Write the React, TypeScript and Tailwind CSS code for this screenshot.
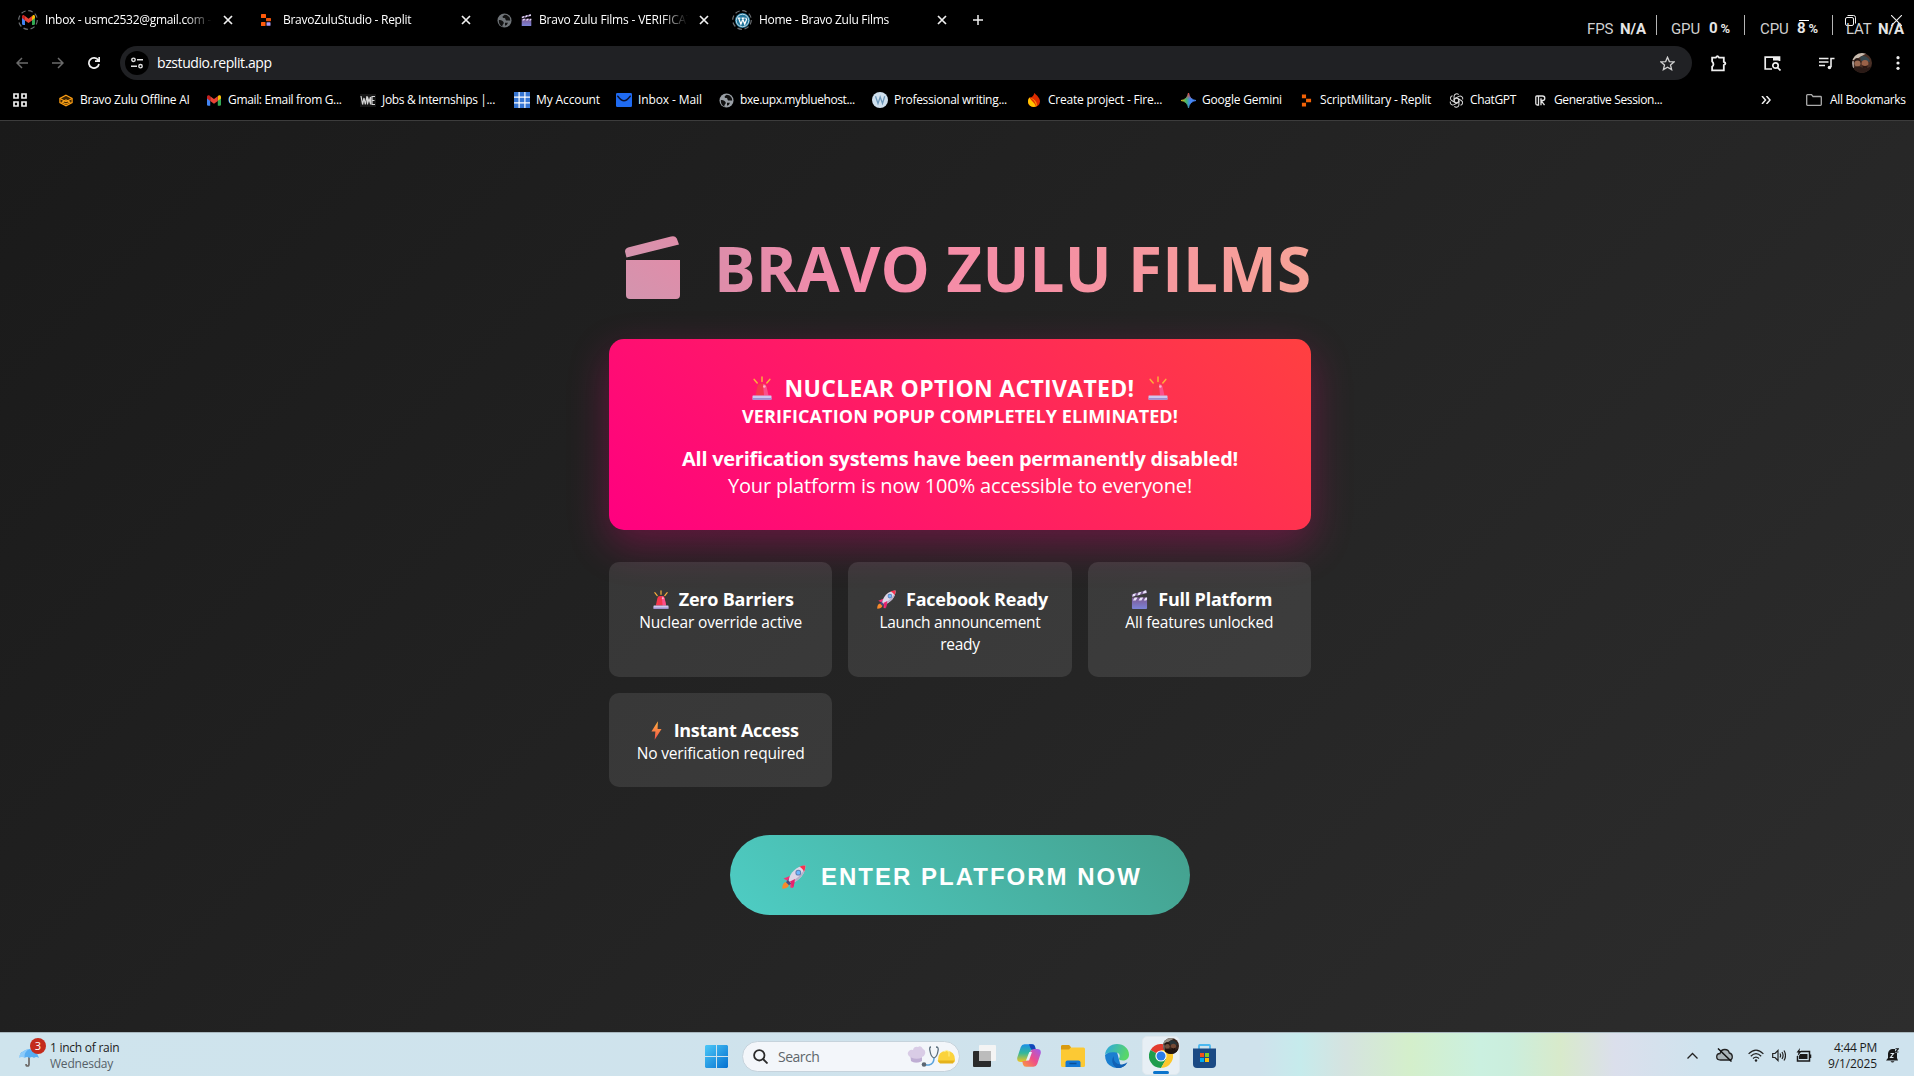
import type { ReactNode } from "react";

type P = { className?: string };

/* ---------- brand and favicon drawings ---------- */

function GmailMark({ className }: P) {
  return (
    <svg viewBox="0 0 24 18" className={className}>
      <path d="M0 3v13a2 2 0 0 0 2 2h3.5V8L0 3z" fill="#4285f4" />
      <path d="M24 3v13a2 2 0 0 1-2 2h-3.5V8L24 3z" fill="#34a853" />
      <path d="M18.500 2v7.500L24 5.500V2.600C24 .3 21.400-.8 19.700.6z" fill="#fbbc04" />
      <path d="M5.500 9.800V1.500L12 6.500l6.500-5v8.300L12 14.700z" fill="#ea4335" />
      <path d="M0 2.600v2.900l5.500 4.300V1.500L4.300.6C2.600-.8 0 .3 0 2.600z" fill="#c5221f" />
    </svg>
  );
}

function Ring({ children }: { children: ReactNode }) {
  return (
    <span className="relative flex size-5 items-center justify-center">
      <svg viewBox="0 0 20 20" className="absolute inset-0 size-5">
        <circle cx="10" cy="10" r="9.300" fill="none" stroke="#6a6d70" strokeWidth="1.200" strokeDasharray="4.600 2.700" />
      </svg>
      {children}
    </span>
  );
}

function ReplitTabMark() {
  return (
    <svg viewBox="0 0 12 12" className="size-3">
      <rect x="1" y="0" width="5" height="4" rx=".6" fill="#ff5a0a" />
      <rect x="6" y="4" width="5" height="3.200" rx=".6" fill="#e8520c" />
      <rect x="1" y="8" width="4.500" height="4" rx=".6" fill="#ff5a0a" />
      <rect x="6.500" y="8.200" width="4" height="3.600" rx=".6" fill="#a99bf5" />
    </svg>
  );
}

function ReplitMark() {
  return (
    <svg viewBox="0 0 12 14" className="h-[13px] w-[11px]">
      <path d="M1 .5h4.500v4H1zM5.500 5H11v4H5.500zM1 9.500h4.500v4H1z" fill="#f26207" />
    </svg>
  );
}

function Globe({ tone = "#9aa0a6" }: { tone?: string }) {
  return (
    <svg viewBox="0 0 16 16" className="size-[15px]">
      <circle cx="8" cy="8" r="7.500" fill={tone} />
      <path d="M2 7.500c1.200 0 3.500.3 4.500 1.600s1 2.200-.2 3.200c-.7.600-.6 1.500-.3 2.300C3.300 13.600 1.500 11 2 7.500z" fill="#111" />
      <path d="M8.200 1.800c-.8.800-2.600 1.400-2.200 2.600.3 1 1.900.4 2.600 1.200.8 1 .2 2 1.200 2.300 1.300.4 2.700-.4 4.200.3.400-3.300-2.300-6.300-5.800-6.400z" fill="#111" />
      <path d="M8.500 10.500h3.200l-1.300 2.300-1.900.8z" fill="#111" />
    </svg>
  );
}

function WordPressMark() {
  return (
    <svg viewBox="0 0 16 16" className="size-[15px]">
      <circle cx="8" cy="8" r="8" fill="#21759b" />
      <circle cx="8" cy="8" r="6.700" fill="none" stroke="#dceef6" strokeWidth=".9" />
      <path d="M2.800 5.500h3M7 5.500h3.200M3.900 5.600 6.300 12l1.700-4.500M8 5.600 10.400 12l1.900-5-.9-2" fill="none" stroke="#fff" strokeWidth="1.300" />
    </svg>
  );
}

function LayersMark() {
  return (
    <svg viewBox="0 0 16 14" className="h-[13px] w-[14px]">
      <path d="M8 .9 15 4.600v4.800L8 13.100 1 9.400V4.600z" fill="#3a2200" stroke="#ff9f12" strokeWidth="1.300" />
      <path d="M1 4.600 8 8.300l7-3.700" fill="none" stroke="#ff9f12" strokeWidth="1.300" />
      <path d="M3.500 9 8 6.200 12.500 9 8 11z" fill="none" stroke="#ffa81a" strokeWidth="1.200" />
    </svg>
  );
}

function JobsMark() {
  return (
    <svg viewBox="0 0 16 13" className="h-[13px] w-4">
      <rect width="16" height="13" fill="#151515" />
      <path d="M1 2l1.600 8.500L4 4l1.300 6.500L7 2M7.500 10.500V3L9 8l1.500-5v7.500M15 2.500h-3v8h3M12 6.500h2.500" fill="none" stroke="#d4d4d4" strokeWidth="1.200" />
    </svg>
  );
}

function BluehostMark() {
  return (
    <svg viewBox="0 0 16 16" className="size-4">
      <rect width="16" height="16" fill="#fff" />
      <g fill="#3575d3">
        <path d="M0 0h4.500v4.500H0zM5.700 0h4.600v4.500H5.700zM11.500 0H16v4.500h-4.500zM0 5.700h4.500v4.600H0zM5.700 5.700h4.600v4.600H5.700zM11.500 5.700H16v4.600h-4.500zM0 11.500h4.500V16H0zM5.700 11.500h4.600V16H5.700zM11.500 11.500H16V16h-4.500z" />
      </g>
    </svg>
  );
}

function MailMark() {
  return (
    <svg viewBox="0 0 16 14" className="h-[14px] w-4">
      <rect width="16" height="14" rx="1.200" fill="#1f6bf2" />
      <path d="M1.800 3.200C4 6 6 7.800 8 7.800S12 6 14.200 3.200" fill="none" stroke="#0a1230" strokeWidth="1.500" strokeLinecap="round" />
    </svg>
  );
}

function WritingMark() {
  return (
    <svg viewBox="0 0 16 16" className="size-4">
      <circle cx="8" cy="8" r="8" fill="#cfe0ee" />
      <path d="M3.500 4.200 6 11.500 8.200 5l2.300 6.500 2.200-7.300" fill="none" stroke="#6d97b8" strokeWidth="1.300" />
    </svg>
  );
}

function FirebaseMark() {
  return (
    <svg viewBox="0 0 12 14" className="h-[14px] w-3">
      <path d="M6.300 0C9 2.500 12 5 12 8.500A5.700 5.700 0 0 1 6 14C2.500 14 0 11.700 0 8.500c0-1.700.6-3 1.600-4C4 4.500 6 2.500 6.300 0z" fill="#dd2c00" />
      <path d="M1.600 4.500C2.500 7.500 6.500 9 8 13.500 4 15 0 12.500 0 8.600c0-1.700.6-3.100 1.600-4.100z" fill="#ffc400" />
      <path d="M1.600 4.500C4 5.500 8 8.500 8 13.500c2.200-1 .5-7.500-6.400-9z" fill="#ff9100" />
    </svg>
  );
}

function GeminiMark() {
  return (
    <svg viewBox="0 0 16 16" className="size-[15px]">
      <defs>
        <linearGradient id="gem" x1="0" y1="0" x2="1" y2="0">
          <stop offset="0" stopColor="#f6c21a" />
          <stop offset=".35" stopColor="#3fb56b" />
          <stop offset=".6" stopColor="#4285f4" />
          <stop offset="1" stopColor="#4f8cff" />
        </linearGradient>
        <linearGradient id="gemTop" x1="0" y1="0" x2="0" y2="1">
          <stop offset="0" stopColor="#f0443a" />
          <stop offset=".42" stopColor="#f0443a" stopOpacity="0" />
        </linearGradient>
      </defs>
      <path d="M8 0c.7 4.500 3.500 7.300 8 8-4.500.7-7.300 3.500-8 8-.7-4.500-3.500-7.300-8-8 4.500-.7 7.300-3.500 8-8z" fill="url(#gem)" stroke="url(#gem)" strokeWidth=".8" />
      <path d="M8 0c.7 4.500 3.500 7.300 8 8-4.500.7-7.300 3.500-8 8-.7-4.500-3.500-7.300-8-8 4.500-.7 7.300-3.500 8-8z" fill="url(#gemTop)" stroke="url(#gemTop)" strokeWidth=".8" />
    </svg>
  );
}

function ChatGptMark() {
  return (
    <svg viewBox="0 0 16 16" className="size-[15px]">
      <g fill="none" stroke="#d6d6d6" strokeWidth="1.100">
        {[0, 60, 120, 180, 240, 300].map((a) => (
          <path key={a} transform={`rotate(${a} 8 8)`} d="M8 5.200 5.400 6.700V3.600a2.800 2.800 0 0 1 4.900-1.800M8 5.200l2.500 1.400" />
        ))}
      </g>
    </svg>
  );
}

function SessionMark() {
  return (
    <svg viewBox="0 0 11 11" className="size-[11px]">
      <path d="M3.500 1H1.800Q.8 1 .8 2v6.500q0 1.500 1.500 1.500h1.200V1h4q2.300 0 2.300 2.200T7.500 5.500H6l3.500 4.700M6 3.200v7" fill="none" stroke="#e4e4e4" strokeWidth="1.300" />
    </svg>
  );
}

/* ---------- emoji-style drawings ---------- */

function Siren({ className }: P) {
  return (
    <svg viewBox="0 0 20 24" className={className}>
      <path d="M10 1v4.500M2.200 3.400l3 3.600M17.800 3.400l-3 3.600" stroke="#fbb03b" strokeWidth="1.500" strokeLinecap="round" />
      <path d="M3.500 19.500 5.400 10.500Q6 7.600 8.600 7.600h2.800q2.600 0 3.200 2.900l1.900 9z" fill="#f5364c" />
      <path d="M11 8h.8q2.200.2 2.800 2.700l1.900 8.800H12z" fill="#fb4f8c" />
      <circle cx="12.300" cy="10.500" r="1.300" fill="#ffb5c8" />
      <rect x=".5" y="19.500" width="19" height="4.200" rx=".6" fill="#cfc6ee" />
      <rect x=".5" y="22" width="19" height="1.700" rx=".6" fill="#9d8fd0" />
    </svg>
  );
}

function Rocket({ className }: P) {
  return (
    <svg viewBox="0 0 24 24" className={className}>
      <path d="M.3 23.700C.2 20 1.200 17.500 4 17l3 3c-.8 2.700-3 3.700-6.700 3.700z" fill="#f98a2b" />
      <path d="M1.600 13.500 8 11l5 5-2.200 7-2.500-.4.200-3.300-4-4z" fill="#f52f76" />
      <path d="M4 17.200 7.800 12.500l4 3.800L7 20.200z" fill="#4b4a80" />
      <path d="M6.500 15.500C8 8 14 1 23.400.5 23.500 9.500 17 15.500 9.500 18.500z" fill="#ded6e8" />
      <path d="M9.500 18.500C17 15.500 23.500 9.500 23.400.5 22 8 15 14 8 17z" fill="#b9afc9" />
      <path d="M17.300 1.800C19.200 1 21 .5 23.400.5c0 2.300-.5 4.300-1.300 6.200-1.200-2.500-2.600-3.900-4.800-4.900z" fill="#f8324f" />
      <circle cx="16.300" cy="7.700" r="2.900" fill="#5e7fb5" />
      <circle cx="16.300" cy="7.700" r="1.900" fill="#6fb8ff" />
      <path d="M8 16.500l5-2.500-1.500 8.500-2.200-3.200z" fill="#e7226d" />
    </svg>
  );
}

function Clapper({ className }: P) {
  return (
    <svg viewBox="0 0 18 20" className={className}>
      <defs>
        <linearGradient id="clap" x1="0" y1="0" x2="0" y2="1">
          <stop offset="0" stopColor="#7d5a92" />
          <stop offset="1" stopColor="#7c83d8" />
        </linearGradient>
      </defs>
      <path d="M.6 4.600 16 .3l.7 3L1.200 7.200z" fill="#7d6496" />
      <path d="M2.300 4.200l3-.9-1.200 3.100-2.800.7zM8 2.600l3-.9-1.500 3.300-2.800.7zM13.500 1.100 16 .3l.6 2.500-4.300 1.100z" fill="#e9e3fa" />
      <path d="M1 8h16v11a1 1 0 0 1-1 1H2a1 1 0 0 1-1-1z" fill="url(#clap)" />
      <path d="M4 8h3l-2 3H2zM10 8h3l-2 3H8zM15.500 8H17v2l-1 1h-2.500z" fill="#e9e3fa" />
    </svg>
  );
}

function Bolt({ className }: P) {
  return (
    <svg viewBox="0 0 12 20" className={className}>
      <defs>
        <linearGradient id="bolt" x1="0" y1="0" x2="0" y2="1">
          <stop offset="0" stopColor="#ffb23e" />
          <stop offset="1" stopColor="#f4504a" />
        </linearGradient>
      </defs>
      <path d="M7.500 0 .5 11.200h4.300L4 20l7.500-11.700H7.200z" fill="url(#bolt)" />
    </svg>
  );
}

/* ---------- browser chrome ---------- */

function CloseX() {
  return (
    <svg viewBox="0 0 10 10" className="size-[10px]">
      <path d="M1 1l8 8M9 1 1 9" stroke="#f0f0f0" strokeWidth="1.700" />
    </svg>
  );
}

function Tab({ icon, children }: { icon: ReactNode; children: ReactNode }) {
  return (
    <div className="flex w-[238px] shrink-0 items-center">
      <span className="flex w-5 shrink-0 justify-center">{icon}</span>
      <span className="ml-[7px] flex w-[167px] items-center overflow-hidden whitespace-nowrap [mask-image:linear-gradient(90deg,#000_84%,transparent)]">
        {children}
      </span>
      <span className="ml-[11px]">
        <CloseX />
      </span>
    </div>
  );
}

function Bookmark({ width, icon, label, track }: { width: string; icon: ReactNode; label: string; track: string }) {
  return (
    <div className={`flex shrink-0 items-center gap-1.5 ${width}`}>
      <span className="flex w-4 shrink-0 justify-center">{icon}</span>
      <span className={`whitespace-nowrap ${track}`}>{label}</span>
    </div>
  );
}

function Portrait({ className }: P) {
  return (
    <svg viewBox="0 0 20 20" className={className}>
      <defs>
        <clipPath id="face">
          <circle cx="10" cy="10" r="10" />
        </clipPath>
      </defs>
      <g clipPath="url(#face)">
        <rect width="20" height="20" fill="#4a3026" />
        <path d="M0 0h15L8 4 3 7H0z" fill="#c9bdb0" />
        <path d="M8 4q5-3 9 2l1 3-9-1z" fill="#35454c" />
        <path d="M2 7q3-4 6 0l1 3-7-1z" fill="#2a1c18" />
        <circle cx="5.500" cy="10.500" r="3" fill="#9a6a52" />
        <circle cx="13" cy="10.500" r="3.400" fill="#9a6248" />
        <path d="M10 12q3 2 6 0l-1 3h-4z" fill="#2b1712" />
        <path d="M2 14.500q4-2 8 0t9-1v7H2z" fill="#2a1a16" />
        <path d="M0 8q2-1 2 2v5H0z" fill="#a39a96" />
      </g>
    </svg>
  );
}

function Stats() {
  return (
    <div className="absolute top-[15px] left-[1587px] flex h-5 w-[320px] items-center font-['Roboto'] text-[15px] tracking-[-0.1px] text-[#d0d0d0]">
      <span className="w-[33px] pt-[7px]">FPS</span>
      <b className="w-[36px] pt-[7px] text-[#e6e6e6]">N/A</b>
      <span className="h-5 w-px bg-[#b5b5b5]" />
      <span className="ml-[14px] w-[38px] pt-[7px]">GPU</span>
      <b className="flex w-[35px] items-baseline gap-[3px] pt-[7px] text-[#e6e6e6]">
        0<span className="text-[13px]">%</span>
      </b>
      <span className="h-5 w-px bg-[#b5b5b5]" />
      <span className="ml-[15px] w-[37px] pt-[7px]">CPU</span>
      <b className="flex w-[35px] items-baseline gap-[3px] pt-[7px] text-[#e6e6e6]">
        8<span className="text-[13px]">%</span>
      </b>
      <span className="h-5 w-px bg-[#b5b5b5]" />
      <span className="ml-[13px] w-[32px] pt-[7px]">LAT</span>
      <b className="pt-[7px] text-[#e6e6e6]">N/A</b>
    </div>
  );
}

function BrowserChrome() {
  return (
    <header className="relative h-[121px] border-b border-[#3c3c3c] bg-black text-[12px] leading-4 text-white">
      <div className="flex h-10 items-center pl-[18px]">
        <Tab icon={<Ring><GmailMark className="h-[10px] w-[13px]" /></Ring>}>
          <span className="tracking-[-0.3px]">Inbox - usmc2532@gmail.com -</span>
        </Tab>
        <Tab icon={<ReplitTabMark />}>
          <span className="tracking-[-0.28px]">BravoZuluStudio - Replit</span>
        </Tab>
        <Tab icon={<Globe tone="#6f7478" />}>
          <Clapper className="mr-[7px] h-3 w-[11px] shrink-0" />
          <span className="tracking-[-0.18px]">Bravo Zulu Films - VERIFICATION</span>
        </Tab>
        <Tab icon={<Ring><WordPressMark /></Ring>}>
          <span className="tracking-[-0.28px]">Home - Bravo Zulu Films</span>
        </Tab>
        <svg viewBox="0 0 10 10" className="ml-[3px] size-[10px]">
          <path d="M5 0v10M0 5h10" stroke="#eee" strokeWidth="1.500" />
        </svg>
        <div className="ml-auto flex items-center pr-3">
          <span className="mr-[36px] h-px w-[10px] bg-white" />
          <svg viewBox="0 0 11 11" className="mr-[35px] size-[11px]" fill="none" stroke="#f2f2f2">
            <rect x=".5" y="2.500" width="8" height="8" rx="1.500" />
            <path d="M2.500.5h6q2 0 2 2v6" />
          </svg>
          <svg viewBox="0 0 10 10" className="size-[11px]">
            <path d="M0 0l10 10M10 0 0 10" stroke="#f2f2f2" />
          </svg>
        </div>
      </div>
      <Stats />

      <div className="flex h-[46px] items-center pl-4">
        <svg viewBox="0 0 12 12" className="size-3" fill="none" stroke="#6b6b6b" strokeWidth="1.500">
          <path d="M12 6H1M6 1 1 6l5 5" />
        </svg>
        <svg viewBox="0 0 12 12" className="ml-6 size-3" fill="none" stroke="#6b6b6b" strokeWidth="1.500">
          <path d="M0 6h11M6 1l5 5-5 5" />
        </svg>
        <svg viewBox="0 0 12 12" className="ml-6 size-3" fill="none" stroke="#f0f0f0" strokeWidth="1.700">
          <path d="M10.300 3.300A5.100 5.100 0 1 0 11 7M11.200 0v4.200H7" />
        </svg>
        <div className="ml-5 flex h-[34px] w-[1572px] items-center rounded-full bg-[#202124] pr-[17px] pl-[5px]">
          <span className="flex size-6 items-center justify-center rounded-full bg-black">
            <svg viewBox="0 0 12 12" className="size-3" fill="none" stroke="#e3e3e3" strokeWidth="1.400">
              <circle cx="2.500" cy="2.800" r="1.700" />
              <path d="M6 2.800h6M0 9.200h6" />
              <circle cx="9.500" cy="9.200" r="1.700" />
            </svg>
          </span>
          <span className="ml-2 text-[14px] tracking-[-0.41px]">bzstudio.replit.app</span>
          <svg viewBox="0 0 16 16" className="ml-auto size-[15px]" fill="none" stroke="#d0d0d0" strokeWidth="1.400">
            <path d="M8 1.300l2 4.600 5 .4-3.800 3.300L12.400 14.500 8 11.900l-4.400 2.600 1.200-4.900L1 6.300l5-.4z" />
          </svg>
        </div>
        <svg viewBox="0 0 16 16" className="ml-[18px] size-[17px]" fill="none" stroke="#eee" strokeWidth="1.700">
          <path d="M2 2.500h3.500q1.500-2.600 3 0H13V6.500q3 1.500 0 3V14.500H2V11q2.500-2.200 0-5z" />
        </svg>
        <svg viewBox="0 0 17 15" className="ml-[37px] h-[15px] w-[17px]" fill="none" stroke="#eee" strokeWidth="1.700">
          <path d="M8 13H1.200V1.200H15.500V5" />
          <path d="M9 3h6.500" strokeWidth="3" />
          <circle cx="11.500" cy="9.500" r="2.700" />
          <path d="M13.500 11.500l3 3" />
        </svg>
        <svg viewBox="0 0 16 13" className="ml-[38px] h-[13px] w-4" fill="none" stroke="#eee" strokeWidth="1.600">
          <path d="M0 1.500h9.500M0 5h9.500M0 8.500h6M12 10V1.500h3.500" />
          <circle cx="10.500" cy="10.500" r="1.800" fill="#eee" stroke="none" />
        </svg>
        <Portrait className="ml-[17px] size-5" />
        <svg viewBox="0 0 4 14" className="ml-6 h-[14px] w-1" fill="#eee">
          <circle cx="2" cy="1.700" r="1.600" />
          <circle cx="2" cy="7" r="1.600" />
          <circle cx="2" cy="12.300" r="1.600" />
        </svg>
      </div>

      <div className="flex h-7 items-center pl-[13px]">
        <svg viewBox="0 0 14 14" className="mr-[31px] size-[14px] shrink-0" fill="none" stroke="#eee" strokeWidth="1.700">
          <path d="M1 1h4v4H1zM9 1h4v4H9zM1 9h4v4H1zM9 9h4v4H9z" />
        </svg>
        <Bookmark width="w-[148px]" icon={<LayersMark />} label="Bravo Zulu Offline AI" track="tracking-[-0.26px]" />
        <Bookmark width="w-[154px]" icon={<GmailMark className="h-[11px] w-[14px]" />} label="Gmail: Email from G..." track="tracking-[-0.34px]" />
        <Bookmark width="w-[154px]" icon={<JobsMark />} label="Jobs & Internships |..." track="tracking-[-0.34px]" />
        <Bookmark width="w-[102px]" icon={<BluehostMark />} label="My Account" track="tracking-[-0.12px]" />
        <Bookmark width="w-[102px]" icon={<MailMark />} label="Inbox - Mail" track="tracking-[-0.1px]" />
        <Bookmark width="w-[154px]" icon={<Globe />} label="bxe.upx.mybluehost..." track="tracking-[-0.41px]" />
        <Bookmark width="w-[154px]" icon={<WritingMark />} label="Professional writing..." track="tracking-[-0.3px]" />
        <Bookmark width="w-[154px]" icon={<FirebaseMark />} label="Create project - Fire..." track="tracking-[-0.23px]" />
        <Bookmark width="w-[118px]" icon={<GeminiMark />} label="Google Gemini" track="tracking-[-0.2px]" />
        <Bookmark width="w-[150px]" icon={<ReplitMark />} label="ScriptMilitary - Replit" track="tracking-[-0.19px]" />
        <Bookmark width="w-[84px]" icon={<ChatGptMark />} label="ChatGPT" track="tracking-[-0.35px]" />
        <Bookmark width="w-[229px]" icon={<SessionMark />} label="Generative Session..." track="tracking-[-0.37px]" />
        <svg viewBox="0 0 10 8" className="h-2 w-[10px] shrink-0" fill="none" stroke="#eee" strokeWidth="1.500">
          <path d="M1 0l3.500 4L1 8M5.500 0 9 4 5.500 8" />
        </svg>
        <svg viewBox="0 0 16 12" className="ml-[35px] h-3 w-4 shrink-0" fill="none" stroke="#ababab" strokeWidth="1.300">
          <path d="M.7 1.500q0-.8.8-.8h4l1.500 1.800h7.500q.8 0 .8.800v7.200q0 .8-.8.800h-13q-.8 0-.8-.8z" />
        </svg>
        <span className="ml-2 tracking-[-0.33px] whitespace-nowrap">All Bookmarks</span>
      </div>
    </header>
  );
}

/* ---------- landing page ---------- */

function Feature({ icon, title, children }: { icon: ReactNode; title: ReactNode; children: ReactNode }) {
  return (
    <div className="rounded-[10px] bg-white/10 pt-[25px] pb-[22px] text-center text-white">
      <h3 className="flex h-[25px] items-center justify-center gap-[10px] pb-px pl-[5px] text-[18px] leading-6 font-bold">
        {icon}
        {title}
      </h3>
      <p className="px-6 text-[15.500px] leading-[21.500px]">{children}</p>
    </div>
  );
}

function Landing() {
  return (
    <main className="flex h-[911px] flex-col items-center bg-[linear-gradient(135deg,#1a1a1a_0%,#2d2d2d_100%)] pl-[6px]">
      <div className="mt-[103px] flex w-[702px] flex-col">
        <h1 className="flex h-[86px] items-center pt-px pl-4">
          <svg viewBox="0 0 55 63" className="h-[63px] w-[55px] shrink-0">
            <defs>
              <linearGradient id="titleIcon" x1="0" y1="1" x2="1" y2="0">
                <stop offset="0" stopColor="#d394ae" />
                <stop offset="1" stopColor="#e08da9" />
              </linearGradient>
            </defs>
            <g fill="url(#titleIcon)">
              <path d="M0 15.500q0-3 3-4L46 .5q4-1.200 5.800 2l2.200 6L1.500 21.500z" />
              <path d="M1 24h54v35q0 4-4 4H5q-4 0-4-4z" />
            </g>
          </svg>
          <span className="ml-[34px] bg-[linear-gradient(90deg,#dd8daa_0%,#f58aaa_24%,#f58fa4_55%,#f7a397_100%)] bg-clip-text text-[62px] leading-[86px] font-bold tracking-[0.2px] whitespace-nowrap text-transparent">
            BRAVO ZULU FILMS
          </span>
        </h1>

        <section className="mt-[29px] flex h-[191px] flex-col items-center rounded-[15px] bg-[linear-gradient(45deg,#ff0080,#ff4040)] text-white shadow-[0_15px_40px_rgba(255,0,128,0.3)]">
          <h2 className="mt-[35px] flex h-7 items-center text-[23px] leading-7 font-bold tracking-[0.3px] whitespace-nowrap">
            <Siren className="mr-[13px] h-6 w-5" />
            NUCLEAR OPTION ACTIVATED!
            <Siren className="ml-[14px] h-6 w-5" />
          </h2>
          <h3 className="text-[18px] leading-7 font-bold tracking-[0.1px] whitespace-nowrap">VERIFICATION POPUP COMPLETELY ELIMINATED!</h3>
          <p className="mt-[15px] text-[20px] leading-[27px] font-bold tracking-[-0.26px] whitespace-nowrap">
            All verification systems have been permanently disabled!
          </p>
          <p className="text-[20px] leading-[27px] tracking-[-0.14px] whitespace-nowrap">Your platform is now 100% accessible to everyone!</p>
        </section>

        <section className="mt-8 grid grid-cols-3 gap-4">
          <Feature icon={<Siren className="h-[19px] w-4" />} title={<span className="tracking-[-0.2px]">Zero Barriers</span>}>
            <span className="tracking-[-0.16px]">Nuclear override active</span>
          </Feature>
          <Feature icon={<Rocket className="size-[19px]" />} title={<span className="tracking-[-0.23px]">Facebook Ready</span>}>
            <span className="tracking-[-0.31px]">Launch announcement ready</span>
          </Feature>
          <Feature icon={<Clapper className="h-[19px] w-[17px]" />} title={<span className="tracking-[-0.22px]">Full Platform</span>}>
            <span className="tracking-[-0.17px]">All features unlocked</span>
          </Feature>
          <Feature icon={<Bolt className="ml-[3px] mr-[2px] h-[19px] w-[11px]" />} title={<span className="tracking-[-0.3px]">Instant Access</span>}>
            <span className="tracking-[-0.15px]">No verification required</span>
          </Feature>
        </section>

        <button className="mt-12 flex h-20 w-[460px] items-center self-center rounded-full bg-[linear-gradient(45deg,#4ecdc4,#44a08d)] pt-[4px] pl-[52px] font-['Liberation_Sans'] text-[24px] font-bold tracking-[2px] whitespace-nowrap text-white">
          <Rocket className="mr-[15px] size-6" />
          ENTER PLATFORM NOW
        </button>
      </div>
    </main>
  );
}

/* ---------- Windows taskbar ---------- */

function SearchArt() {
  return (
    <svg viewBox="0 0 48 22" className="h-[22px] w-12">
      <path d="M3 12Q-1 9 2 6q2-2 4-1 1-4 5-3 3-2 5 2 3 1 2 5-1 3-3 3v4q-6 3-11 0z" fill="#d9cce6" />
      <path d="M4 12.500q6 2.500 11 0v3.500q-6 3-11 0z" fill="#bfaed4" />
      <path d="M24 2q-2 0-1 4 1 6 4 7 3-1 4-7 1-4-2-4" fill="none" stroke="#5b6e7c" strokeWidth="1.300" />
      <path d="M27 13q0 6-5 7h-4" fill="none" stroke="#5aa3dc" strokeWidth="1.500" />
      <circle cx="17" cy="19.500" r="2.300" fill="#5b6672" />
      <path d="M31 15q0-9 8.500-9T48 15q0 2-1 2.500H32q-1-.5-1-2.500z" fill="#fbd33c" />
      <path d="M30.500 15.500H47.500L46 18.500H33z" fill="#e5b21c" />
      <path d="M37 6.500q3-2 5 0v5" fill="none" stroke="#fff08a" strokeWidth="1" />
    </svg>
  );
}

function Copilot() {
  return (
    <svg viewBox="0 0 24 23" className="h-[23px] w-6">
      <defs>
        <linearGradient id="cpA" x1="0" y1="0" x2="0" y2="1">
          <stop offset="0" stopColor="#1a8fe8" />
          <stop offset=".5" stopColor="#34b89a" />
          <stop offset="1" stopColor="#f5c51d" />
        </linearGradient>
        <linearGradient id="cpB" x1="1" y1="0" x2="0" y2="1">
          <stop offset="0" stopColor="#9a5cf0" />
          <stop offset=".5" stopColor="#ee4e8a" />
          <stop offset="1" stopColor="#fa9c3c" />
        </linearGradient>
      </defs>
      <path d="M7.500.3H15q2.300 0 3 2.300L18.800 6H14l-3.500 9.500Q9.700 18 7 18H4Q-.5 18 .3 13.500L3.800 3Q4.700.3 7.500.3z" fill="url(#cpA)" />
      <path d="M12 .3h3q2.300 0 3 2.300L18.800 6H16q-2 0-2.700-2.200z" fill="#1546b8" />
      <path d="M16.500 22.700H9q-2.300 0-3-2.300L5.200 17H10l3.500-9.500Q14.300 5 17 5h3q4.500 0 3.700 4.500L20.200 20q-.9 2.700-3.700 2.700z" fill="url(#cpB)" />
      <path d="M12.300 8h2.700l-3 8.500H9z" fill="#e6f0f5" />
    </svg>
  );
}

function Edge() {
  return (
    <svg viewBox="0 0 24 24" className="size-6">
      <defs>
        <linearGradient id="edA" x1="0" y1="0" x2="1" y2=".3">
          <stop offset="0" stopColor="#2ba5e6" />
          <stop offset="1" stopColor="#58d768" />
        </linearGradient>
        <linearGradient id="edB" x1="0" y1="0" x2="0" y2="1">
          <stop offset="0" stopColor="#1577c9" />
          <stop offset="1" stopColor="#0d55a8" />
        </linearGradient>
      </defs>
      <path d="M0 11Q0 20 8 23.300 12 24.700 16 23.300L12 8 4 8z" fill="#1b7fd0" />
      <path d="M0 11C.5 4.500 5.500 0 12 0c7 0 12 5 12 10.500 0 4-3 6-6 6-2.500 0-4.500-1-4-2 1.500-2 1-5.500-3-6C6 7.500 1 9 0 11z" fill="url(#edA)" />
      <path d="M8 13c0 5.500 5 9 10 8 2-.4 3.500-1.500 4.300-2.200C20 22.500 16.500 24 12.500 24 8 22 6 17 8 13z" fill="url(#edB)" />
      <path d="M9 12c-1 5 2 9 8 8.500 2.500-.3 4.500-1.500 5.500-2.500C20 23 15 24.500 12 24 7 21 6.500 15 9 12z" fill="#1262b5" />
    </svg>
  );
}

function ChromeMark() {
  return (
    <svg viewBox="0 0 24 24" className="size-6">
      <path d="M12 12 1.600 6A12 12 0 0 1 22.400 6z" fill="#e33b2e" />
      <path d="M1.600 6A12 12 0 0 0 12 24l5.200-9L12 12z" fill="#1f9d4d" />
      <path d="M22.400 6H12l5.200 9L12 24A12 12 0 0 0 22.400 6z" fill="#fcc72b" />
      <circle cx="12" cy="12" r="5.600" fill="#fff" />
      <circle cx="12" cy="12" r="4.500" fill="#2b7de9" />
    </svg>
  );
}

function Taskbar() {
  return (
    <footer className="flex h-11 items-center border-t border-[#a9b8bf] bg-[linear-gradient(90deg,#cfe4ed_0px,#cfe2ec_1260px,#c6ebec_1300px,#d5e3e0_1345px,#d4efcb_1410px,#cbf0e0_1480px,#cbeedd_1510px,#d8eacb_1560px,#dbdfec_1615px,#cfe3ee_1700px)] text-[12px] text-[#1c1c1c]">
      <div className="flex w-[705px] items-center pl-[19px]">
        <span className="relative">
          <svg viewBox="0 0 21 21" className="mt-[6px] size-[21px]">
            <path d="M10 8v9q0 2-1.500 2T7 17" fill="none" stroke="#6d6a68" strokeWidth="1.700" />
            <path d="M0 11Q2 3 10.500 2 18 3 20 11q-3-2-5 0-2-2-4.500 0Q8 9 5.500 11 3-1 0 11z" fill="#58aef2" />
            <path d="M0 11Q1 4 10 2 5 5 5.500 11 3 9 0 11z" fill="#8ccbfa" />
          </svg>
          <span className="absolute top-[-3px] left-[11px] flex size-4 items-center justify-center rounded-full bg-[#c42b1c] text-[11px] text-white">3</span>
        </span>
        <span className="ml-[10px] flex flex-col pt-[2px] leading-4">
          <span className="tracking-[-0.25px]">1 inch of rain</span>
          <span className="tracking-[-0.22px] text-[#566168]">Wednesday</span>
        </span>
      </div>

      <svg viewBox="0 0 23 23" className="mt-[3px] size-[23px]">
        <defs>
          <linearGradient id="win" x1="0" y1="0" x2="1" y2="1">
            <stop offset="0" stopColor="#4cc8f8" />
            <stop offset="1" stopColor="#0470d0" />
          </linearGradient>
        </defs>
        <path d="M1 0h10v11H0V1zM12 0h10l1 1v10H12zM0 12h11v11H1l-1-1zM12 12h11v10l-1 1H12z" fill="url(#win)" />
      </svg>
      <div className="mt-[3px] ml-[14px] flex h-[31px] w-[218px] items-center rounded-full border border-[#c6d3dc] bg-[#f3f6fa] pr-1 pl-[10px]">
        <svg viewBox="0 0 15 15" className="size-[15px]" fill="none" stroke="#2a2a2a" strokeWidth="1.800">
          <circle cx="6.300" cy="6.300" r="5.200" />
          <path d="M10 10l4.500 4.500" />
        </svg>
        <span className="ml-[10px] text-[14px] tracking-[-0.5px] text-[#60666b]">Search</span>
        <span className="ml-auto">
          <SearchArt />
        </span>
      </div>
      <svg viewBox="0 0 23 22" className="mt-[2px] ml-[13px] h-[22px] w-[23px]">
        <rect y="6" width="18" height="16" rx="1" fill="#2b2b2b" />
        <rect x="6" width="17" height="16" rx="1" fill="#f4f4f4" />
        <path d="M6 6h12v10H6z" fill="#bcbcbc" />
      </svg>
      <span className="mt-[2px] ml-[21px]">
        <Copilot />
      </span>
      <svg viewBox="0 0 24 22" className="mt-[2px] ml-5 h-[22px] w-6">
        <path d="M0 1.500Q0 0 1.500 0H8l2 2.500h12.500Q24 2.500 24 4v16.500q0 1.500-1.500 1.500h-21Q0 22 0 20.500z" fill="#fcc934" />
        <path d="M0 4V1.500Q0 0 1.500 0H8l2 2.200L8 4.500H0z" fill="#d99a10" />
        <path d="M4.500 22v-4.500q0-2 2-2h11q2 0 2 2V22z" fill="#1277d4" />
        <path d="M8.500 18.500h7" stroke="#0a4f96" strokeWidth="1.500" />
      </svg>
      <span className="mt-[2px] ml-5">
        <Edge />
      </span>
      <div className="relative mt-[2px] ml-[13px] flex h-[39px] w-[38px] items-center rounded-[5px] border border-[#dfe8ee] bg-[#e7eff5] pl-[6px]">
        <ChromeMark />
        <Portrait className="absolute top-[1px] left-[20px] size-4 brightness-75" />
        <span className="absolute bottom-0 left-[10px] h-[3px] w-4 rounded-full bg-[#0a74cc]" />
      </div>
      <svg viewBox="0 0 23 24" className="mt-[2px] ml-[13px] h-6 w-[23px]">
        <path d="M6 6V1.700q0-.7.700-.7h9.600q.7 0 .7.700V6" fill="none" stroke="#4cb8ef" strokeWidth="1.800" />
        <path d="M0 4.500h23V20q0 4-4 4H4q-4 0-4-4z" fill="#1b4a84" />
        <path d="M7 9h4v4H7z" fill="#f1511b" />
        <path d="M12 9h4v4h-4z" fill="#80cc28" />
        <path d="M7 14h4v4H7z" fill="#00adef" />
        <path d="M12 14h4v4h-4z" fill="#fbbc09" />
      </svg>

      <div className="ml-auto flex items-center pt-px pr-[15px]">
        <svg viewBox="0 0 11 7" className="mr-[18px] h-[7px] w-[11px]" fill="none" stroke="#222" strokeWidth="1.300">
          <path d="M.5 6.500l5-5 5 5" />
        </svg>
        <svg viewBox="0 0 17 14" className="mr-[15px] h-[14px] w-[17px]">
          <path d="M4.500 12Q.7 12 .7 8.800T4 5.500Q5 1.500 8.800 1.500T13.300 5Q16.300 5.500 16.300 8.700T13 12z" fill="#aab4b8" stroke="#222" strokeWidth="1.300" />
          <path d="M2 .5 15.500 13.500" stroke="#111" strokeWidth="1.500" />
        </svg>
        <svg viewBox="0 0 16 13" className="mr-[8px] h-[13px] w-4" fill="none" stroke="#222" strokeWidth="1.200">
          <path d="M.6 4.800q7.400-7.500 14.800 0M2.800 7.200q5.200-5 10.400 0M5 9.500q3-2.700 6 0" />
          <circle cx="8" cy="11.500" r="1.200" fill="#222" stroke="none" />
        </svg>
        <svg viewBox="0 0 14 13" className="mr-[10px] h-[13px] w-[14px]" fill="none" stroke="#222" strokeWidth="1.200">
          <path d="M.7 4.500H3l3-3v10l-3-3H.7zM8 4.500q1.200 2 0 4M10 3q2.200 3.500 0 7M12 1.500q3 5 0 10" />
        </svg>
        <svg viewBox="0 0 16 15" className="mr-[15px] h-[15px] w-4">
          <path d="M5 3.500h8.500V13h-12V8M14.500 6.500v3.500" fill="none" stroke="#1a1a1a" strokeWidth="1.500" />
          <path d="M4 6h7.500v5H3V8z" fill="#1a1a1a" />
          <path d="M4 0 .5 4.500h2L1.500 8 6 3H3.500z" fill="#1a1a1a" />
        </svg>
        <span className="mr-[9px] flex w-[50px] flex-col items-end pt-px leading-4">
          <span className="tracking-[-0.27px]">4:44 PM</span>
          <span className="tracking-[-0.12px]">9/1/2025</span>
        </span>
        <svg viewBox="0 0 13 15" className="h-[15px] w-[13px]">
          <path d="M2 5.500Q2.500 1.500 6 1h3v4h2v5l1 2.500H0L2 10z" fill="#181818" />
          <path d="M4.500 13.300h4q-2 2.500-4 0z" fill="#181818" />
          <path d="M4.500 5.500h3l-3 4h3" fill="none" stroke="#dfeaf0" strokeWidth="1.100" />
          <path d="M9.500.7h3l-3 3.300h3" fill="none" stroke="#181818" strokeWidth="1.100" />
        </svg>
      </div>
    </footer>
  );
}

export default function App() {
  return (
    <div className="h-[1076px] w-[1914px] overflow-hidden bg-black font-['Open_Sans','Noto_Sans',sans-serif]">
      <BrowserChrome />
      <Landing />
      <Taskbar />
    </div>
  );
}
